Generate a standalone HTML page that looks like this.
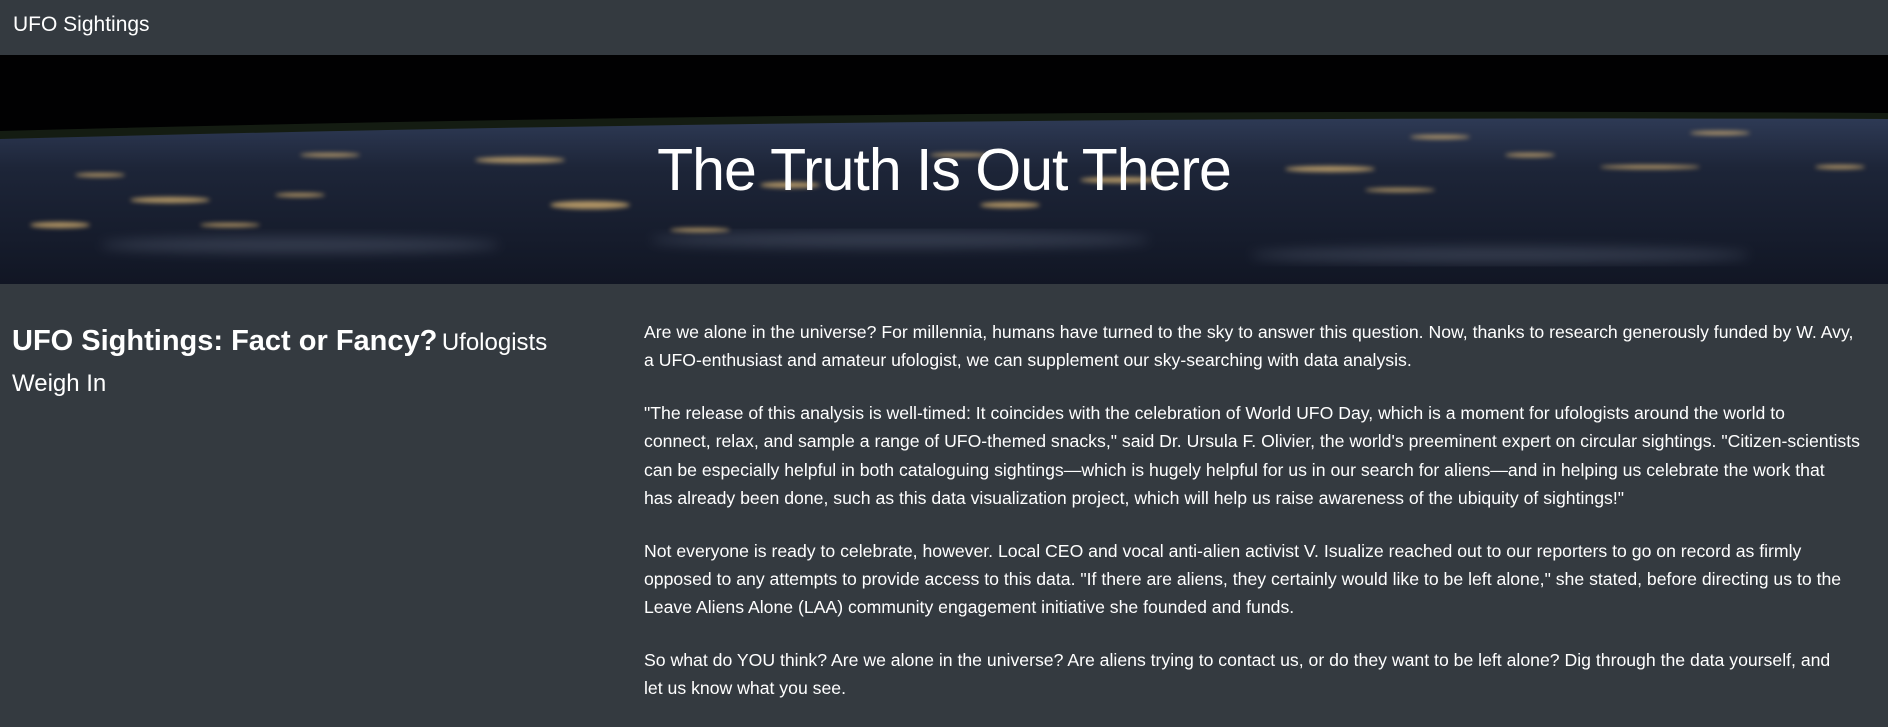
<!DOCTYPE html>
<html><head><meta charset="utf-8"><style>
*{margin:0;padding:0;box-sizing:border-box}
body{width:1888px;height:708px;overflow:hidden;background:#343a40;color:#fff;font-family:"Liberation Sans",sans-serif}
.nav{height:55px;background:#343a40;position:relative}
.brand{position:absolute;left:13px;top:11px;font-size:21px;line-height:28px}
.hero{position:relative;height:229px;background:#000;overflow:hidden}
.hero svg{position:absolute;left:0;top:0}
.hero h1{position:absolute;left:0;right:0;top:115px;text-align:center;font-weight:300;font-size:59px;line-height:76px;margin-top:-38px;color:#fff;letter-spacing:-1px}
.left{position:absolute;left:12px;top:322px;width:560px;line-height:38px}
.left b{font-size:29px}
.left span{font-size:24px}
.right{position:absolute;left:644px;top:318px;font-size:17.65px;line-height:28.3px;white-space:nowrap}
.right p{margin-bottom:24.5px}
</style></head><body>
<div class="nav"><div class="brand">UFO Sightings</div></div>
<div class="hero">
<svg width="1888" height="229" viewBox="0 0 1888 229">
<defs>
<linearGradient id="e" x1="0" y1="0" x2="0" y2="1">
<stop offset="0" stop-color="#2e3a55"/><stop offset="0.3" stop-color="#1d2538"/><stop offset="1" stop-color="#111624"/></linearGradient>
<filter id="b"><feGaussianBlur stdDeviation="2.5"/></filter>
<filter id="c"><feGaussianBlur stdDeviation="6"/></filter>
</defs>
<rect width="1888" height="229" fill="#010102"/>
<path d="M0 76 Q900 52 1888 58 L1888 66 Q900 62 0 86Z" fill="#141c12"/>
<path d="M0 84 Q900 60 1888 64 L1888 229 L0 229Z" fill="url(#e)"/>
<g filter="url(#c)" fill="#7c869c" opacity="0.3">
<ellipse cx="300" cy="190" rx="200" ry="8"/><ellipse cx="900" cy="185" rx="250" ry="8"/><ellipse cx="1500" cy="200" rx="250" ry="8"/>
</g>
<g filter="url(#b)" fill="#f3c77a" opacity="0.7">
<ellipse cx="330" cy="100" rx="30" ry="2"/><ellipse cx="520" cy="105" rx="45" ry="3"/>
<ellipse cx="590" cy="150" rx="40" ry="4"/><ellipse cx="170" cy="145" rx="40" ry="3"/>
<ellipse cx="300" cy="140" rx="25" ry="2"/><ellipse cx="100" cy="120" rx="25" ry="2"/>
<ellipse cx="790" cy="130" rx="30" ry="3"/><ellipse cx="960" cy="100" rx="30" ry="2"/>
<ellipse cx="1120" cy="125" rx="40" ry="3"/><ellipse cx="1330" cy="114" rx="45" ry="3"/>
<ellipse cx="1440" cy="82" rx="30" ry="2"/><ellipse cx="1530" cy="100" rx="25" ry="2"/>
<ellipse cx="1720" cy="78" rx="30" ry="2"/><ellipse cx="1650" cy="112" rx="50" ry="2"/>
<ellipse cx="1840" cy="112" rx="25" ry="2"/><ellipse cx="1010" cy="150" rx="30" ry="3"/>
<ellipse cx="1400" cy="135" rx="35" ry="2"/><ellipse cx="60" cy="170" rx="30" ry="3"/>
<ellipse cx="700" cy="175" rx="30" ry="2"/><ellipse cx="230" cy="170" rx="30" ry="2"/>
</g>
</svg>
<h1>The Truth Is Out There</h1>
</div>
<div class="left"><b>UFO Sightings: Fact or Fancy?</b> <span>Ufologists<br>Weigh In</span></div>
<div class="right">
<p>Are we alone in the universe? For millennia, humans have turned to the sky to answer this question. Now, thanks to research generously funded by W. Avy,<br>a UFO-enthusiast and amateur ufologist, we can supplement our sky-searching with data analysis.</p>
<p>"The release of this analysis is well-timed: It coincides with the celebration of World UFO Day, which is a moment for ufologists around the world to<br>connect, relax, and sample a range of UFO-themed snacks," said Dr. Ursula F. Olivier, the world's preeminent expert on circular sightings. "Citizen-scientists<br>can be especially helpful in both cataloguing sightings—which is hugely helpful for us in our search for aliens—and in helping us celebrate the work that<br>has already been done, such as this data visualization project, which will help us raise awareness of the ubiquity of sightings!"</p>
<p>Not everyone is ready to celebrate, however. Local CEO and vocal anti-alien activist V. Isualize reached out to our reporters to go on record as firmly<br>opposed to any attempts to provide access to this data. "If there are aliens, they certainly would like to be left alone," she stated, before directing us to the<br>Leave Aliens Alone (LAA) community engagement initiative she founded and funds.</p>
<p>So what do YOU think? Are we alone in the universe? Are aliens trying to contact us, or do they want to be left alone? Dig through the data yourself, and<br>let us know what you see.</p>
</div>
</body></html>
